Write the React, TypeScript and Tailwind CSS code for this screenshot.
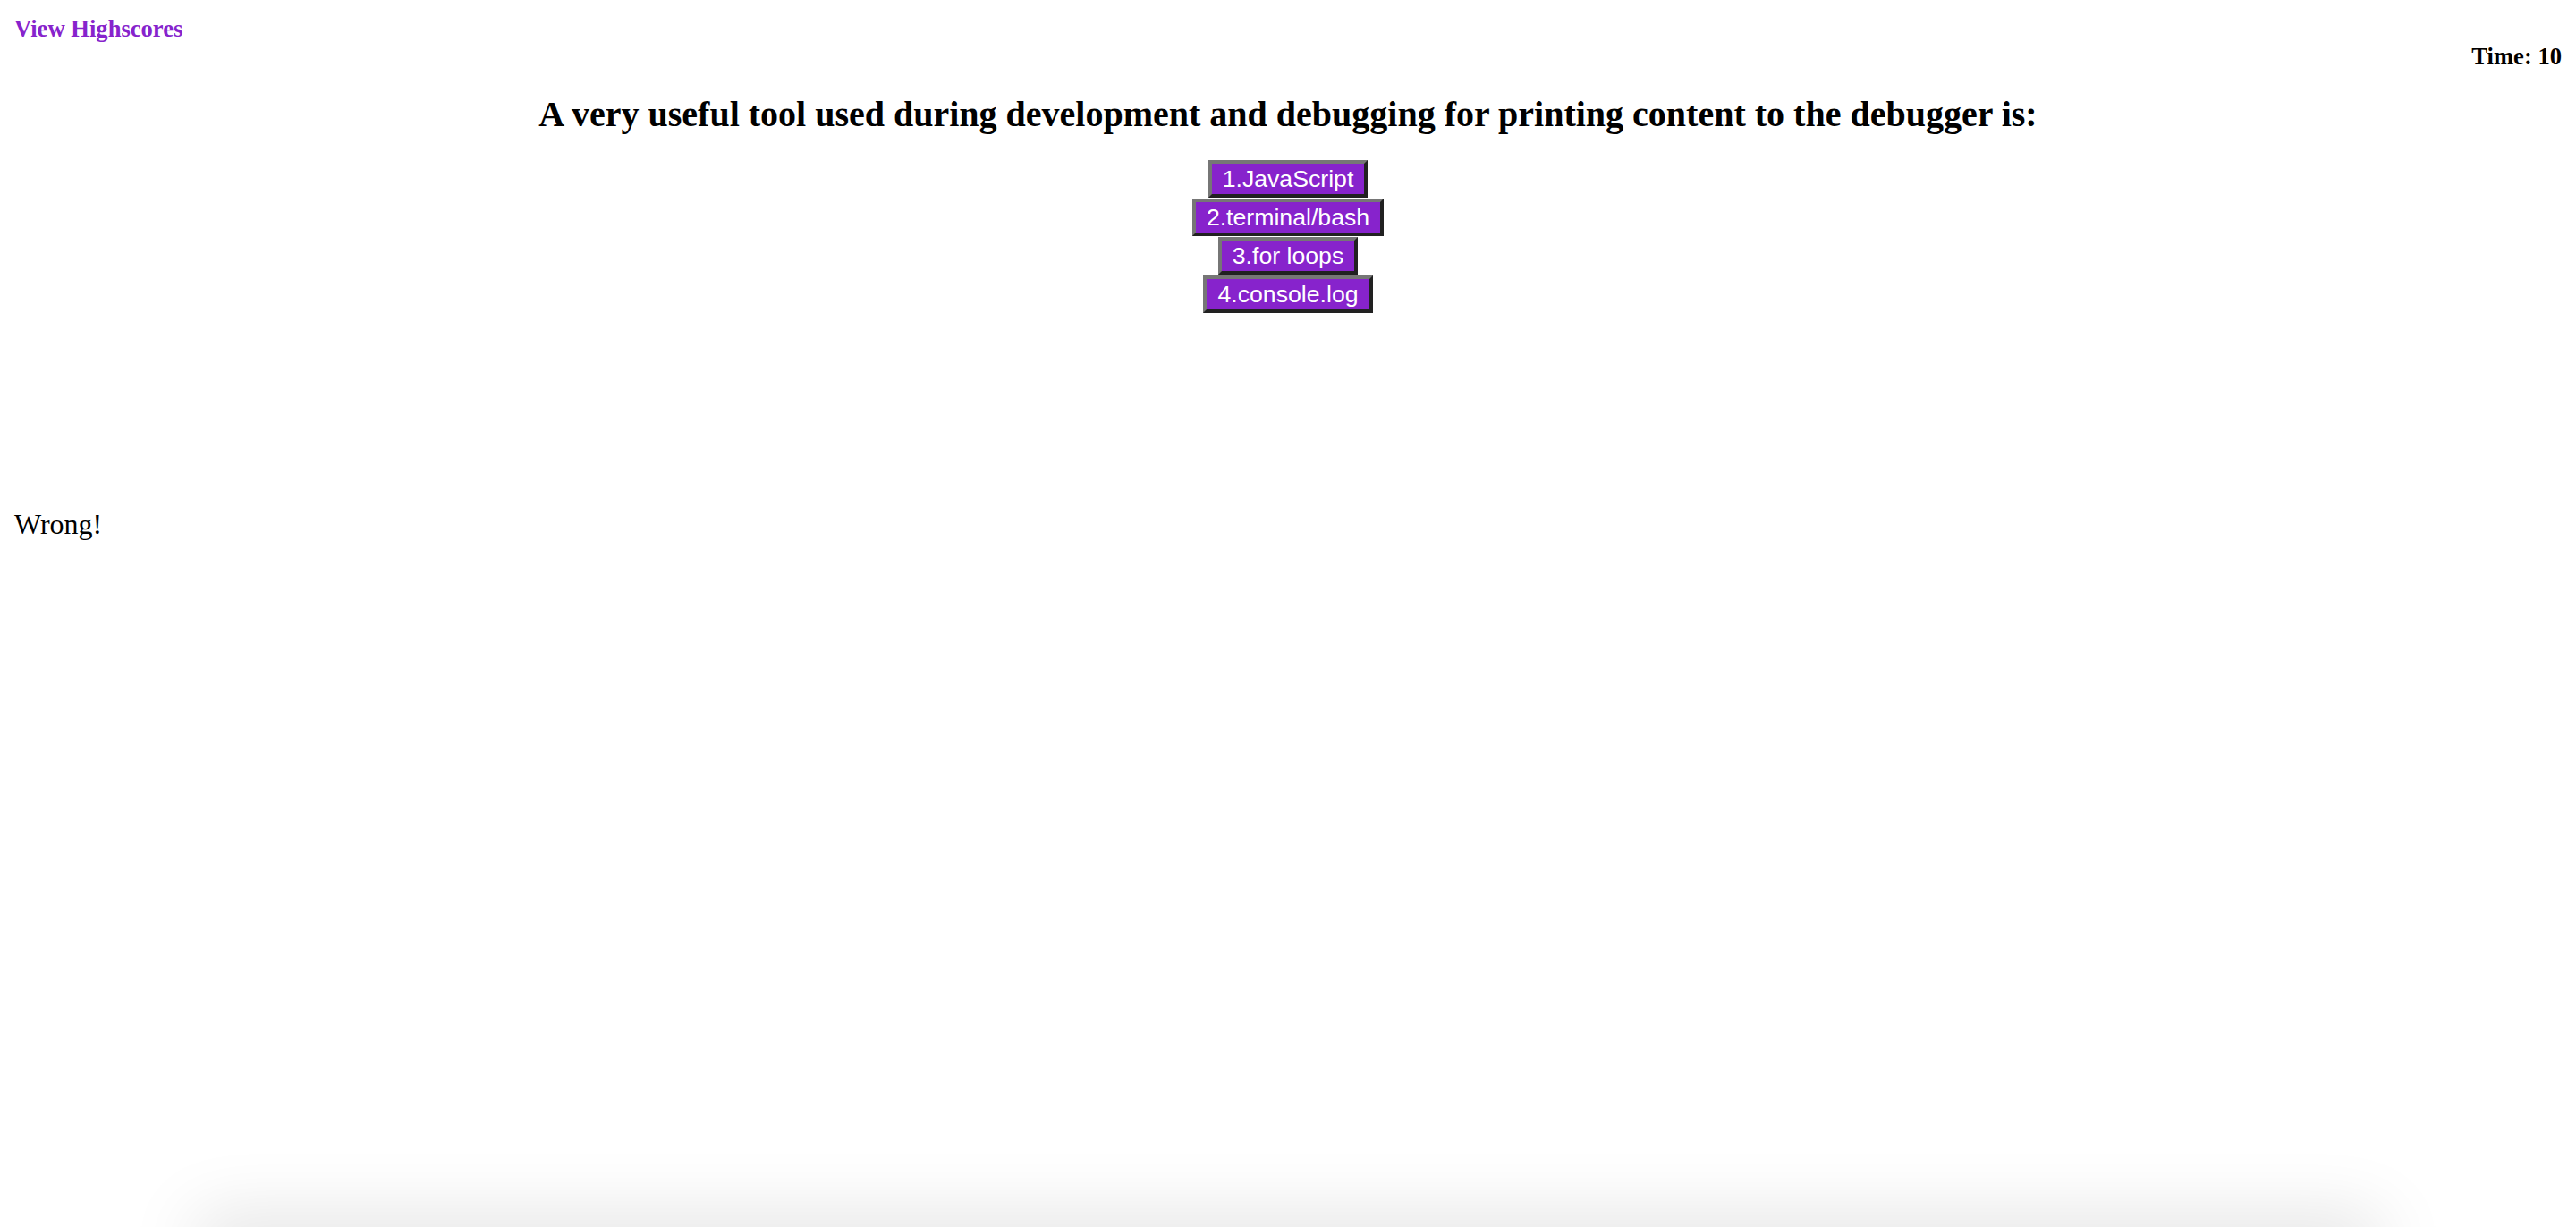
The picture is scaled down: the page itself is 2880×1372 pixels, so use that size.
import React from "react";

const answers = ["1.JavaScript", "2.terminal/bash", "3.for loops", "4.console.log"];

export default function App() {
  return (
    <div className="relative h-[1372px] w-full overflow-hidden bg-white font-['Liberation_Serif','Times_New_Roman',serif] text-black">
      <div className="pt-[17px] pl-[16px]">
        <a className="cursor-pointer text-[26.6px] font-bold leading-[30px] text-[#8723cc]">View Highscores</a>
      </div>
      <div className="flex justify-end pr-[16px]">
        <span className="text-[26.6px] font-bold leading-[30px]">Time: 10</span>
      </div>
      <h2 className="mt-[27px] text-center text-[40px] font-bold leading-[46px]">
        A very useful tool used during development and debugging for printing content to the debugger is:
      </h2>
      <div className="mt-[28px] flex flex-col items-center gap-[1px]">
        {answers.map((a) => (
          <button
            key={a}
            className="border-4 border-solid border-t-[#767676] border-l-[#767676] border-b-[#212121] border-r-[#212121] bg-[#8723cc] px-[12px] py-[2px] font-['Liberation_Sans',Arial,sans-serif] text-[26.67px] leading-[30px] text-white"
          >
            {a}
          </button>
        ))}
      </div>
      <p className="mt-[218px] pl-[16px] text-[32px] leading-[37px]">Wrong!</p>
      <div className="pointer-events-none absolute left-[230px] right-[230px] top-[1372px] h-[40px] shadow-[0_0_80px_10px_rgba(0,0,0,0.13)]" />
    </div>
  );
}
